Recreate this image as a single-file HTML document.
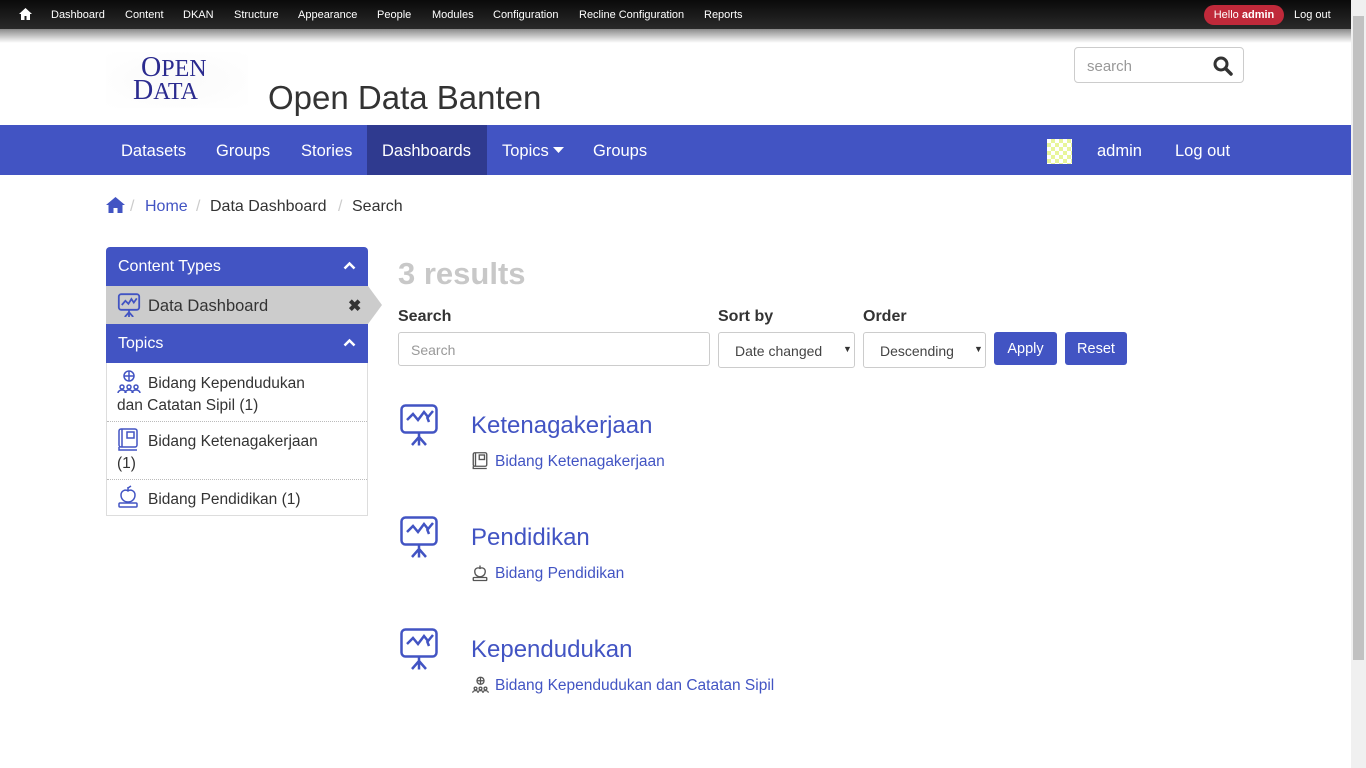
<!DOCTYPE html>
<html><head><meta charset="utf-8"><style>
*{box-sizing:border-box;margin:0;padding:0}
body{width:1366px;height:768px;overflow:hidden;background:#fff;font-family:"Liberation Sans",sans-serif;color:#333;position:relative}
.a{position:absolute;white-space:nowrap}
#tb{position:absolute;left:0;top:0;width:1351px;height:29px;background:linear-gradient(#0a0a0a,#2a2a2a)}
#tbs{position:absolute;left:0;top:29px;width:1351px;height:14px;background:linear-gradient(#8a8a8a,#fff)}
.tl{font-size:11px;color:#fff;top:9px}
#sb{position:absolute;left:1351px;top:0;width:15px;height:768px;background:#f0f0f0}
#sbt{position:absolute;left:1353px;top:16px;width:11px;height:644px;background:#c1c1c1}
#nav{position:absolute;left:0;top:125px;width:1351px;height:50px;background:#4254c3}
.nl{color:#fff;font-size:16.5px;top:142px}
.side{position:absolute;left:106px;width:262px}
.blue{background:#4254c3;color:#fff;font-size:16px;padding-left:12px}
.ti{font-size:15.5px;color:#333}
.inp{position:absolute;border:1px solid #ccc;border-radius:3px;background:#fff;font-size:14px}
.btn{position:absolute;background:#4254c3;color:#fff;border-radius:3px;font-size:14.5px;text-align:center;line-height:34px;height:33px;top:332px}
.rt{font-size:24px;color:#4254c3;left:471px}
.rl{font-size:15.5px;color:#4254c3;left:495px}
.chev{position:absolute;right:12px;top:14px}
</style></head><body>
<div id="tb"></div><div id="tbs"></div>
<svg class="a" style="left:19px;top:8px" width="13" height="12" viewBox="0 0 13 12"><path d="M6.5 0L0 6h2v6h3.5V8h2v4H11V6h2z" fill="#fff"/></svg>
<span class="a tl" style="left:51px">Dashboard</span>
<span class="a tl" style="left:125px">Content</span>
<span class="a tl" style="left:183px">DKAN</span>
<span class="a tl" style="left:234px">Structure</span>
<span class="a tl" style="left:298px">Appearance</span>
<span class="a tl" style="left:377px">People</span>
<span class="a tl" style="left:432px">Modules</span>
<span class="a tl" style="left:493px">Configuration</span>
<span class="a tl" style="left:579px">Recline Configuration</span>
<span class="a tl" style="left:704px">Reports</span>
<div class="a" style="left:1204px;top:5px;width:80px;height:20px;border-radius:10px;background:#c0293a;color:#fff;font-size:11px;line-height:20px;text-align:center">Hello <b>admin</b></div>
<span class="a tl" style="left:1294px">Log out</span>
<div id="sb"></div><div id="sbt"></div>
<div class="a" style="left:106px;top:52px;width:142px;height:56px;background:radial-gradient(#fafafa,#fff)"></div>
<div class="a" style="left:141px;top:57px;font-size:24px;color:#2b2b8f;line-height:21px;font-family:'Liberation Serif',serif"><span style="font-size:28px">O</span>PEN<br><span style="margin-left:-8px"><span style="font-size:28px">D</span>ATA</span></div>
<div class="a" style="left:268px;top:79px;font-size:33px;color:#333">Open Data Banten</div>
<div class="inp" style="left:1074px;top:47px;width:170px;height:36px;border-radius:4px"><span class="a" style="left:12px;top:10px;font-size:15px;color:#999">search</span>
<svg class="a" style="left:138px;top:8px" width="20" height="20" viewBox="0 0 20 20"><circle cx="8" cy="8" r="6" fill="none" stroke="#333" stroke-width="3"/><path d="M12.5 12.5L18 18" stroke="#333" stroke-width="3.5" stroke-linecap="round"/></svg></div>
<div id="nav"></div>
<div class="a" style="left:367px;top:125px;width:120px;height:50px;background:#2f3a8f"></div>
<span class="a nl" style="left:121px">Datasets</span>
<span class="a nl" style="left:216px">Groups</span>
<span class="a nl" style="left:301px">Stories</span>
<span class="a nl" style="left:382px">Dashboards</span>
<span class="a nl" style="left:502px">Topics</span>
<svg class="a" style="left:553px;top:147px" width="11" height="7"><path d="M0 0h11L5.5 6z" fill="#fff"/></svg>
<span class="a nl" style="left:593px">Groups</span>
<div class="a" style="left:1047px;top:139px;width:25px;height:25px;background:repeating-conic-gradient(#e8f59a 0 25%,#fff 0 50%) 0 0/8px 8px"></div>
<span class="a nl" style="left:1097px">admin</span>
<span class="a nl" style="left:1175px">Log out</span>
<svg class="a" style="left:106px;top:197px" width="19" height="16" viewBox="0 0 19 16"><path d="M9.5 0L0 8h2.5v8h5v-5h4v5h5V8H19z" fill="#4254c3"/></svg>
<div class="a" style="left:130px;top:198px;font-size:16px;color:#ccc">/</div>
<div class="a" style="left:145px;top:198px;font-size:16px;color:#4254c3">Home</div>
<div class="a" style="left:196px;top:198px;font-size:16px;color:#ccc">/</div>
<div class="a" style="left:210px;top:198px;font-size:16px">Data Dashboard</div>
<div class="a" style="left:338px;top:198px;font-size:16px;color:#ccc">/</div>
<div class="a" style="left:352px;top:198px;font-size:16px">Search</div>

<div class="side blue" style="top:247px;height:39px;line-height:40px;border-radius:4px 4px 0 0">Content Types<svg class="chev" width="13" height="9"><path d="M1.5 7.5L6.5 2.5 11.5 7.5" fill="none" stroke="#fff" stroke-width="2.5"/></svg></div>
<div class="side" style="top:286px;height:38px;background:#ccc"></div>
<div class="a" style="left:368px;top:286px;width:0;height:0;border-top:19px solid transparent;border-bottom:19px solid transparent;border-left:14px solid #ccc"></div>
<svg class="a" style="left:117px;top:293px" width="24" height="24" viewBox="0 0 38 40"><rect x="2" y="2" width="34" height="26" rx="4" fill="none" stroke="#4254c3" stroke-width="3"/><path d="M7 20l6-7 5 5 5-8 4 6 5-7" fill="none" stroke="#4254c3" stroke-width="3"/><path d="M19 28v12M19 32l-7 8M19 32l7 8" stroke="#4254c3" stroke-width="3"/></svg>
<span class="a" style="left:148px;top:297px;font-size:16.5px">Data Dashboard</span>
<span class="a" style="left:348px;top:296px;font-size:16px;font-weight:bold">✖</span>
<div class="side blue" style="top:324px;height:39px;line-height:39px">Topics<svg class="chev" width="13" height="9"><path d="M1.5 7.5L6.5 2.5 11.5 7.5" fill="none" stroke="#fff" stroke-width="2.5"/></svg></div>
<div class="side" style="top:363px;height:153px;border:1px solid #ddd;border-top:none"></div>
<div class="a" style="left:107px;top:421px;width:260px;border-top:1px dotted #bbb"></div>
<div class="a" style="left:107px;top:479px;width:260px;border-top:1px dotted #bbb"></div>
<svg class="a" style="left:117px;top:370px" width="24" height="24" viewBox="0 0 24 24" fill="none" stroke="#4254c3" stroke-width="1.5"><circle cx="12" cy="6" r="5"/><path d="M7 6h10M12 1v10"/><circle cx="5" cy="17" r="2"/><circle cx="12" cy="17" r="2"/><circle cx="19" cy="17" r="2"/><path d="M1 23a4 3 0 018 0M8 23a4 3 0 018 0M15 23a4 3 0 018 0"/></svg>
<span class="a ti" style="left:148px;top:375px">Bidang Kependudukan</span>
<span class="a ti" style="left:117px;top:397px">dan Catatan Sipil (1)</span>
<svg class="a" style="left:118px;top:428px" width="20" height="24" viewBox="0 0 20 24" fill="none" stroke="#4254c3" stroke-width="1.5"><rect x="1" y="1" width="18" height="18" rx="2"/><rect x="9" y="4" width="7" height="6"/><path d="M1 19v3h18M4 1v18"/></svg>
<span class="a ti" style="left:148px;top:433px">Bidang Ketenagakerjaan</span>
<span class="a ti" style="left:117px;top:455px">(1)</span>
<svg class="a" style="left:118px;top:485px" width="20" height="24" viewBox="0 0 20 24" fill="none" stroke="#4254c3" stroke-width="1.5"><path d="M10 6c-3-2-7 0-7 4 0 4 3 7 7 7s7-3 7-7c0-4-4-6-7-4zM10 6V2M10 3l3-2"/><rect x="1" y="18" width="18" height="4" rx="1"/></svg>
<span class="a ti" style="left:148px;top:491px">Bidang Pendidikan (1)</span>

<div class="a" style="left:398px;top:256px;font-size:31px;font-weight:bold;color:#c8c8c8">3 results</div>
<div class="a" style="left:398px;top:308px;font-size:16px;font-weight:bold">Search</div>
<div class="a" style="left:718px;top:308px;font-size:16px;font-weight:bold">Sort by</div>
<div class="a" style="left:863px;top:308px;font-size:16px;font-weight:bold">Order</div>
<div class="inp" style="left:398px;top:332px;width:312px;height:34px"><span class="a" style="left:12px;top:9px;color:#999">Search</span></div>
<div class="inp" style="left:718px;top:332px;width:137px;height:36px"><span class="a" style="left:16px;top:10px;color:#444">Date changed</span><span class="a" style="left:124px;top:11px;font-size:9px">▼</span></div>
<div class="inp" style="left:863px;top:332px;width:123px;height:36px"><span class="a" style="left:16px;top:10px;color:#444">Descending</span><span class="a" style="left:110px;top:11px;font-size:9px">▼</span></div>
<div class="btn" style="left:994px;width:63px">Apply</div>
<div class="btn" style="left:1065px;width:62px">Reset</div>

<svg width="0" height="0" style="position:absolute"><defs><g id="dash" fill="none" stroke="#4254c3" stroke-width="2.5"><rect x="1.5" y="1.5" width="35" height="27" rx="4"/><path d="M7 16l6-6 5 6 6-8 4 5 5-6M27 13l2 5"/><path d="M19 28.5v13M19 33l-7 8M19 33l7 8"/></g></defs></svg>
<svg class="a" style="left:400px;top:404px" width="38" height="42"><use href="#dash"/></svg>
<svg class="a" style="left:400px;top:516px" width="38" height="42"><use href="#dash"/></svg>
<svg class="a" style="left:400px;top:628px" width="38" height="42"><use href="#dash"/></svg>
<div class="a rt" style="top:412px">Ketenagakerjaan</div>
<div class="a rt" style="top:524px">Pendidikan</div>
<div class="a rt" style="top:636px">Kependudukan</div>
<svg class="a" style="left:472px;top:452px" width="16" height="18" viewBox="0 0 20 24" fill="none" stroke="#555" stroke-width="1.8"><rect x="1" y="1" width="18" height="18" rx="2"/><rect x="9" y="4" width="7" height="6"/><path d="M1 19v3h18M4 1v18"/></svg>
<svg class="a" style="left:472px;top:564px" width="16" height="18" viewBox="0 0 20 24" fill="none" stroke="#555" stroke-width="1.8"><path d="M10 6c-3-2-7 0-7 4 0 4 3 7 7 7s7-3 7-7c0-4-4-6-7-4zM10 6V2"/><rect x="1" y="18" width="18" height="4" rx="1"/></svg>
<svg class="a" style="left:472px;top:676px" width="17" height="18" viewBox="0 0 24 24" fill="none" stroke="#555" stroke-width="1.8"><circle cx="12" cy="6" r="5"/><path d="M7 6h10M12 1v10"/><circle cx="5" cy="17" r="2"/><circle cx="12" cy="17" r="2"/><circle cx="19" cy="17" r="2"/><path d="M1 23a4 3 0 018 0M8 23a4 3 0 018 0M15 23a4 3 0 018 0"/></svg>
<div class="a rl" style="top:453px">Bidang Ketenagakerjaan</div>
<div class="a rl" style="top:565px">Bidang Pendidikan</div>
<div class="a rl" style="top:677px">Bidang Kependudukan dan Catatan Sipil</div>
</body></html>
